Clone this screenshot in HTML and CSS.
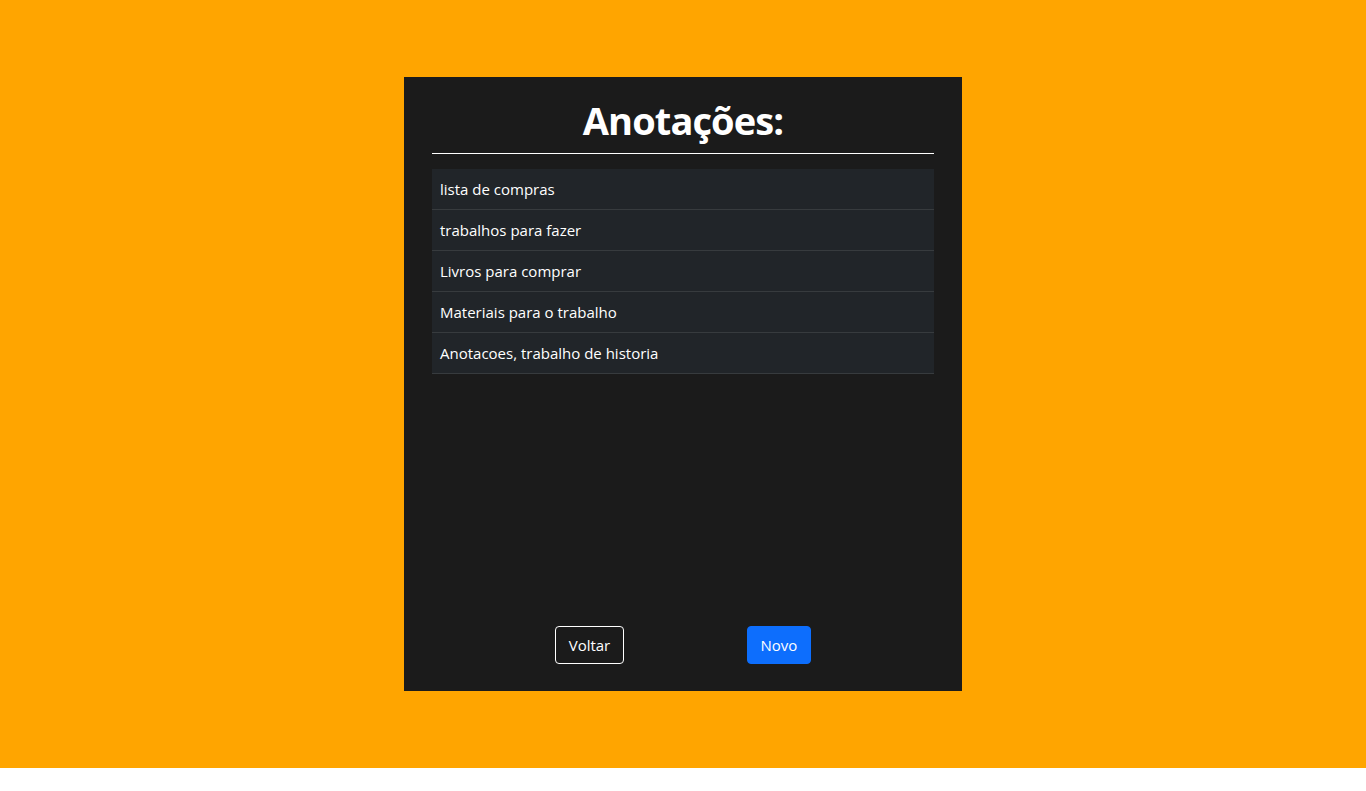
FILE: index.html
```html
<!DOCTYPE html>
<html lang="pt-BR">
<head>
<meta charset="utf-8">
<title>Anotações</title>
<link rel="stylesheet" href="styles.css">
</head>
<body>
<main class="page">
  <section class="card">
    <h1 class="title">Anotações:</h1>
    <hr class="divider">
    <ul class="notes">
      <li class="note">lista de compras</li>
      <li class="note">trabalhos para fazer</li>
      <li class="note">Livros para comprar</li>
      <li class="note">Materiais para o trabalho</li>
      <li class="note">Anotacoes, trabalho de historia</li>
    </ul>
    <div class="actions">
      <button class="btn btn-outline">Voltar</button>
      <button class="btn btn-primary">Novo</button>
    </div>
  </section>
</main>
</body>
</html>
```
FILE: styles.css
```css
* { box-sizing: border-box; }
html, body { margin: 0; padding: 0; background: #ffffff; }
body {
  font-family: "Open Sans", "Noto Sans", sans-serif;
  font-size: 16px;
  line-height: 24px;
  color: #ffffff;
}
.page {
  height: 768px;
  background: #ffa500;
  display: flex;
  align-items: center;
  justify-content: center;
}
.card {
  width: 558px;
  height: 614px;
  background: #1b1b1b;
  padding: 20px 28px 27px;
  display: flex;
  flex-direction: column;
}
.title {
  margin: 0;
  font-size: 38px;
  line-height: 47px;
  font-weight: 700;
  text-align: center;
  letter-spacing: -0.9px;
}
.divider {
  margin: 9px 0 15px;
  border: 0;
  border-top: 1px solid #ffffff;
  height: 0;
}
.notes {
  list-style: none;
  margin: 0;
  padding: 0;
  flex: 1;
}
.note {
  background: #212529;
  border-bottom: 1px solid #373b3e;
  padding: 8px 8px;
  font-size: 15px;
}
.actions {
  display: flex;
  justify-content: space-evenly;
}
.btn {
  font-family: inherit;
  font-size: 15px;
  line-height: 24px;
  padding: 6px 12.5px;
  border-radius: 4px;
  color: #ffffff;
  cursor: pointer;
}
.btn-outline {
  background: transparent;
  border: 1px solid #ffffff;
}
.btn-primary {
  background: #0d6efd;
  border: 1px solid #0d6efd;
}
```
